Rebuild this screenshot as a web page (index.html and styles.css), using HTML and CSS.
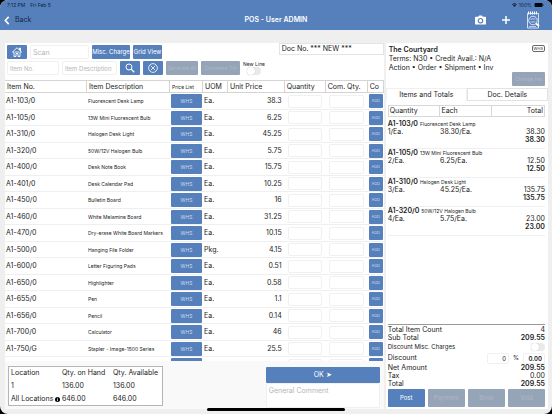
FILE: index.html
```html
<!DOCTYPE html>
<html lang="en">
<head>
  <meta charset="UTF-8" />
  <meta name="viewport" content="width=device-width, initial-scale=1" />
  <title>POS - User ADMIN</title>
  <link rel="stylesheet" href="styles.css">
</head>
<body>
<div class="device">

  <header class="header">
    <div class="status">
      <span>7:12 PM</span>
      <span>Fri Feb 5</span>
      <span class="status-right">
        <svg class="wifi" viewBox="0 0 12 9"><path d="M0 3a9 9 0 0 1 12 0L10.600 4.500a7 7 0 0 0-9.200 0zM2.300 5.400a5.500 5.500 0 0 1 7.400 0L6 9z" fill="#10233f"/></svg>
        <span>100%</span>
        <svg class="battery" viewBox="0 0 20 9"><rect width="18" height="9" rx="2" fill="#05080f"/><rect x="18.500" y="3" width="1.500" height="3" fill="#05080f"/></svg>
      </span>
    </div>
    <nav class="nav">
      <a href="#" class="back">
        <svg viewBox="0 0 10 16"><path d="M8 1.500 2 8l6 6.500" fill="none" stroke="#fff" stroke-width="2.800"/></svg>
        Back
      </a>
      <h1>POS - User ADMIN</h1>
      <div class="nav-icons">
        <button aria-label="Camera"><svg class="camera" viewBox="0 0 24 20"><path fill="#fff" fill-rule="evenodd" d="M2 3h5l2-3h6l2 3h5a2 2 0 0 1 2 2v13a2 2 0 0 1-2 2H2a2 2 0 0 1-2-2V5a2 2 0 0 1 2-2zm10 2.500a6 6 0 1 0 0 12 6 6 0 0 0 0-12zm0 2.500a3.500 3.500 0 1 1 0 7 3.500 3.500 0 0 1 0-7z"/></svg></button>
        <button aria-label="Add"><svg class="plus" viewBox="0 0 16 16"><path d="M8 0v16M0 8h16" stroke="#fff" stroke-width="3"/></svg></button>
        <button aria-label="Search documents"><svg class="notes" viewBox="0 0 28 36" fill="none" stroke="#fff" stroke-width="1.500"><path d="M3 5h22v29H3z"/><path d="M5 1v6M9 1v6M13 1v6M17 1v6M21 1v6" stroke-width="2.200"/><circle cx="14" cy="19" r="8.500"/><path d="M9 16h10M9 22h10M6 31h14" stroke-width="1.200"/><path d="m20 25 6 5" stroke-width="3.500"/></svg></button>
      </div>
    </nav>
  </header>

  <main class="main">

    <section class="left">
      <div class="tools">
        <div class="tool-rows">
          <div class="row">
            <button class="btn icon-btn" aria-label="Home"><svg class="home" viewBox="0 0 20 20" fill="none" stroke="#fff" stroke-width="1.800"><path d="M1 10 10 1.500 19 10h-3v9h-4v-6H8v6H4v-9zM15 6V2h2v6"/><path d="M6 10h8"/></svg></button>
            <input class="field scan" placeholder="Scan" aria-label="Scan">
            <button class="btn misc">Misc. Charge</button>
            <button class="btn grid-view">Grid View</button>
          </div>
          <div class="row">
            <input class="field item-no" placeholder="Item No." aria-label="Item No.">
            <input class="field item-desc" placeholder="Item Description" aria-label="Item Description">
            <button class="btn icon-btn" aria-label="Search"><svg viewBox="0 0 20 20" fill="none" stroke="#fff" stroke-width="2"><circle cx="8" cy="8" r="6"/><path d="m12.500 12.500 6 6" stroke-width="2.600"/></svg></button>
            <button class="btn icon-btn" aria-label="Clear"><svg viewBox="0 0 20 20" fill="none" stroke="#fff" stroke-width="1.600"><circle cx="10" cy="10" r="8.800"/><path d="m5.500 5.500 9 9m0-9-9 9"/></svg></button>
            <button class="btn gen" disabled>Generate All</button>
            <button class="btn down" disabled>Comment Txt</button>
            <label class="new-line">New Line<input type="checkbox" class="switch"></label>
          </div>
        </div>
        <div class="doc-no">Doc No. *** NEW ***</div>
      </div>

      <div class="list">
        <table class="items">
          <colgroup><col class="c-no"><col class="c-desc"><col class="c-list"><col class="c-uom"><col class="c-price"><col class="c-qty"><col class="c-com"><col class="c-co"></colgroup>
          <thead>
            <tr><th>Item No.</th><th>Item Description</th><th class="small">Price List</th><th>UOM</th><th>Unit Price</th><th>Quantity</th><th>Com. Qty.</th><th>Co</th></tr>
          </thead>
          <tbody id="itemRows"></tbody>
        </table>
      </div>

      <div class="bottom">
        <table class="stock">
          <tr><th>Location</th><th>Qty. on Hand</th><th>Qty. Available</th></tr>
          <tr><td>1</td><td>136.00</td><td>136.00</td></tr>
          <tr><td>All Locations <svg class="info" viewBox="0 0 12 12"><circle cx="6" cy="6" r="6"/><path d="M6 2v2M6 5v5" stroke="#fff" stroke-width="1.800"/></svg></td><td>646.00</td><td>646.00</td></tr>
        </table>
        <div class="confirm">
          <button class="btn ok">OK ➤</button>
          <textarea class="field comment" placeholder="General Comment" aria-label="General Comment"></textarea>
        </div>
      </div>
    </section>

    <aside class="right">
      <div class="customer">
        <span class="tag">WHS</span>
        <h2>The Courtyard</h2>
        <p>Terms: N30 • Credit Avail.: N/A</p>
        <p>Action • Order • Shipment • Inv</p>
        <button class="btn change" disabled>Change Inv</button>
      </div>
      <div class="tabs">
        <button class="tab active">Items and Totals</button>
        <button class="tab">Doc. Details</button>
      </div>
      <div class="order">
        <div class="order-head"><span>Quantity</span><span>Each</span><span>Total</span></div>
        <div id="orderLines" class="lines"></div>
        <div class="totals">
          <div class="total"><span>Total Item Count</span><span>4</span></div>
          <div class="total"><span>Sub Total</span><b>209.55</b></div>
          <label class="total misc-row"><span>Discount Misc. Charges</span><input type="checkbox" class="switch"></label>
          <div class="total discount"><label for="discount">Discount</label><input id="discount" class="field" value="0"><span>%</span><input class="field bold" value="0.00" aria-label="Discount amount"></div>
          <div class="total"><span>Net Amount</span><b>209.55</b></div>
          <div class="total"><span>Tax</span><span>0.00</span></div>
          <div class="total"><span>Total</span><b>209.55</b></div>
        </div>
        <div class="actions">
          <button class="btn">Post</button>
          <button class="btn" disabled>Payment</button>
          <button class="btn" disabled>Book</button>
          <button class="btn" disabled>Void</button>
        </div>
      </div>
    </aside>

  </main>
  <div class="home-bar"></div>
</div>

<script>
  const items = [
    ['A1-103/0', 'Fluorescent Desk Lamp', 'Ea.', '38.3'],
    ['A1-105/0', '13W Mini Fluorescent Bulb', 'Ea.', '6.25'],
    ['A1-310/0', 'Halogen Desk Light', 'Ea.', '45.25'],
    ['A1-320/0', '50W/12V Halogen Bulb', 'Ea.', '5.75'],
    ['A1-400/0', 'Desk Note Book', 'Ea.', '15.75'],
    ['A1-401/0', 'Desk Calendar Pad', 'Ea.', '10.25'],
    ['A1-450/0', 'Bulletin Board', 'Ea.', '16'],
    ['A1-460/0', 'White Melamine Board', 'Ea.', '31.25'],
    ['A1-470/0', 'Dry-erase White Board Markers', 'Ea.', '10.15'],
    ['A1-500/0', 'Hanging File Folder', 'Pkg.', '4.15'],
    ['A1-600/0', 'Letter Figuring Pads', 'Ea.', '0.51'],
    ['A1-650/0', 'Highlighter', 'Ea.', '0.58'],
    ['A1-655/0', 'Pen', 'Ea.', '1.1'],
    ['A1-656/0', 'Pencil', 'Ea.', '0.14'],
    ['A1-700/0', 'Calculator', 'Ea.', '46'],
    ['A1-750/G', 'Stapler - Image-1500 Series', 'Ea.', '25.5'],
    ['', '', '', '']
  ];

  document.getElementById('itemRows').innerHTML = items.map(([no, desc, uom, price]) => `
    <tr>
      <td>${no}</td>
      <td class="small">${desc}</td>
      <td class="cell-btn"><button class="btn whs">${no ? 'WHS' : ''}</button></td>
      <td class="uom">${uom}</td>
      <td class="num">${price}</td>
      <td class="cell-field"><input class="field" aria-label="Quantity"></td>
      <td class="cell-field"><input class="field" aria-label="Committed quantity"></td>
      <td class="cell-btn"><button class="btn add">${no ? 'ADD' : ''}</button></td>
    </tr>`).join('');

  const lines = [
    ['A1-103/0', 'Fluorescent Desk Lamp', '1/Ea.', '38.30/Ea.', '38.30'],
    ['A1-105/0', '13W Mini Fluorescent Bulb', '2/Ea.', '6.25/Ea.', '12.50'],
    ['A1-310/0', 'Halogen Desk Light', '3/Ea.', '45.25/Ea.', '135.75'],
    ['A1-320/0', '50W/12V Halogen Bulb', '4/Ea.', '5.75/Ea.', '23.00']
  ];

  document.getElementById('orderLines').innerHTML = lines.map(([no, desc, qty, each, total]) => `
    <div class="line">
      <div><b>${no}</b> <span class="small">${desc}</span></div>
      <div class="line-cols"><span>${qty}</span><span>${each}</span><span>${total}</span></div>
      <div class="line-total">${total}</div>
    </div>`).join('');
</script>
</body>
</html>
```

FILE: styles.css
```css
* {
  box-sizing: border-box;
}

body {
  margin: 0;
  background: #000;
  color: #222;
  font-family: Inter, "Liberation Sans", sans-serif;
  font-size: 7px;
  line-height: 8px;
}

button, input, textarea {
  font: inherit;
  margin: 0;
}

h1, h2, p {
  margin: 0;
  font-size: 7px;
}

.device {
  display: flex;
  flex-direction: column;
  height: 100vh;
  background: #efefef;
  border-radius: 8px;
  overflow: hidden;
  position: relative;
}

/* Header */
.header {
  background: #5680bb;
  height: 30px;
  flex: none;
}

.status {
  display: flex;
  align-items: center;
  gap: 5px;
  height: 10px;
  padding: 0 8px 0 7px;
  font-size: 5px;
  color: #10233f;
}

.status-right {
  margin-left: auto;
  display: flex;
  align-items: center;
  gap: 2px;
}

.wifi {
  width: 5px;
  height: 4px;
}

.battery {
  width: 10px;
  height: 4px;
}

.nav {
  display: grid;
  grid-template-columns: 1fr auto 1fr;
  align-items: center;
  height: 20px;
  padding: 0 4px;
}

.nav h1 {
  color: #fff;
  font-weight: 600;
}

.back {
  display: flex;
  align-items: center;
  gap: 5px;
  color: #16263f;
  text-decoration: none;
}

.back svg {
  width: 6px;
  height: 9px;
}

.nav-icons {
  display: flex;
  justify-content: flex-end;
  align-items: center;
  gap: 16px;
  padding-right: 8px;
}

.nav-icons button {
  padding: 0;
  border: 0;
  background: none;
  display: flex;
}

.camera {
  width: 11px;
  height: 10px;
}

.plus {
  width: 8px;
  height: 8px;
}

.notes {
  width: 14px;
  height: 18px;
}

/* Shared controls */
.btn {
  display: flex;
  align-items: center;
  justify-content: center;
  padding: 0;
  border: 0;
  border-radius: 1px;
  background: #5680bb;
  color: #fff;
  white-space: nowrap;
}

.btn:disabled {
  background: #96a4b7;
  color: #adb8c7;
}

.btn svg {
  width: 10px;
  height: 10px;
}

.field {
  border: 1px solid #f0f0f0;
  border-radius: 2px;
  background: #fff;
  color: #222;
  padding: 0 2px;
  min-width: 0;
  outline: none;
}

.field::placeholder {
  color: #b5b5b8;
}

.switch {
  appearance: none;
  width: 14px;
  height: 8px;
  border-radius: 4px;
  background: #e9e9ea;
}

.switch::before {
  content: "";
  display: block;
  width: 8px;
  height: 8px;
  border-radius: 50%;
  background: #fff;
  box-shadow: 0 0 1px #aaa;
}

.small {
  font-size: 5px;
}

/* Columns */
.main {
  flex: 1;
  min-height: 0;
  display: grid;
  grid-template-columns: 7fr 3fr;
  gap: 2px;
  padding: 13px 4px 5px 5px;
}

.left {
  display: flex;
  flex-direction: column;
  min-height: 0;
  background: #f9f9f9;
}

.tools {
  display: flex;
  justify-content: space-between;
  align-items: flex-start;
  height: 37px;
  background: #fff;
}

.tool-rows {
  display: flex;
  flex-direction: column;
  gap: 2px;
  padding: 2px 0 0 2px;
}

.row {
  display: flex;
  gap: 3px;
}

.row .btn, .row .field {
  height: 14px;
}

.icon-btn { width: 20px; }
.scan { width: 59px; }
.misc { width: 38px; }
.grid-view { width: 29px; }
.item-no { width: 52px; }
.item-desc { width: 55px; }
.gen { width: 32px; font-size: 5px; }
.down { width: 39px; font-size: 5px; }

.misc, .grid-view, .item-no, .item-desc {
  font-size: 6px;
}

.new-line {
  display: flex;
  flex-direction: column;
  align-items: center;
  font-size: 5px;
  line-height: 6px;
}

.doc-no {
  width: 105px;
  height: 12px;
  line-height: 10px;
  padding-left: 2px;
  border: 1px solid #e4e4e4;
}

/* Item list */
.list {
  height: 281px;
  overflow: hidden;
  background: #fff;
}

.items {
  width: 100%;
  table-layout: fixed;
  border-collapse: separate;
  border-spacing: 0;
}

.items th, .items td {
  padding: 0 0 0 1px;
  text-align: left;
  white-space: nowrap;
  overflow: hidden;
}

.items th {
  height: 13px;
  padding-left: 2px;
  font-weight: 400;
  border: solid #d4d4d4;
  border-width: 1px 1px 1px 0;
}

.items tbody tr {
  height: 16px;
}

.items tbody tr:nth-child(odd) {
  height: 17px;
}

.items td {
  border-bottom: 1px solid #efefef;
}

.items .num {
  text-align: right;
  padding-right: 3px;
}

.c-no { width: 82px; }
.c-desc { width: 83px; }
.c-list { width: 33px; }
.c-uom { width: 25px; }
.c-qty { width: 41px; }
.c-com { width: 42px; }
.c-co { width: 16px; }

.items .cell-field {
  padding: 0 4px 0 3px;
}

.items .cell-field .field {
  display: block;
  width: 100%;
  height: 13px;
}

.whs, .add {
  width: 31px;
  height: 14px;
  font-size: 5px;
  color: #cddaec;
}

.add {
  width: 14px;
  font-size: 4px;
}

/* Stock and comment */
.bottom {
  flex: 1;
  display: flex;
  justify-content: space-between;
  align-items: flex-start;
  padding: 5px 4px 0 3px;
}

.stock {
  width: 155px;
  height: 40px;
  background: #fff;
  border: 1px solid #b5b5b5;
  border-spacing: 0;
  table-layout: fixed;
}

.stock th, .stock td {
  padding: 0 0 0 2px;
  font-weight: 400;
  text-align: left;
  white-space: nowrap;
}

.info {
  width: 5px;
  height: 5px;
  vertical-align: -1px;
}

.confirm {
  width: 114px;
  display: flex;
  flex-direction: column;
  padding-top: 1px;
}

.ok {
  height: 16px;
}

.comment {
  height: 25px;
  resize: none;
  padding-top: 3px;
}

/* Right side */
.right {
  display: flex;
  flex-direction: column;
  background: #fff;
  min-height: 0;
}

.customer {
  position: relative;
  height: 45px;
  padding: 2px 3px;
  line-height: 9px;
}

.customer h2 {
  font-weight: 600;
}

.tag {
  position: absolute;
  top: 2px;
  right: 3px;
  padding: 0 1px;
  border: 1px solid #666;
  border-radius: 2px;
  font-size: 4px;
  line-height: 5px;
}

.change {
  width: 33px;
  height: 14px;
  margin-left: auto;
  font-size: 5px;
}

.tabs {
  display: flex;
}

.tab {
  flex: 1;
  height: 13px;
  padding: 0;
  border: 1px solid #e2e2e2;
  background: #fff;
  color: #222;
}

.tab.active {
  border-color: #efefef;
  border-bottom-color: #fff;
}

.order {
  flex: 1;
  display: flex;
  flex-direction: column;
  padding: 4px 3px 2px 2px;
}

.order-head, .line-cols {
  display: grid;
  grid-template-columns: 1fr 1fr 1fr;
}

.order-head {
  height: 12px;
  border: 1px solid #d8d8d8;
  line-height: 10px;
}

.order-head span {
  padding: 0 1px;
  border-right: 1px solid #d8d8d8;
}

.order-head span:last-child {
  border: 0;
}

.order-head span:last-child, .line-cols span:last-child {
  text-align: right;
}

.lines {
  flex: 1;
  padding-top: 3px;
}

.line {
  height: 29px;
  border-bottom: 1px solid #efefef;
}

.line b, .line-total, .total b, .bold {
  font-weight: 600;
}

.line-total {
  text-align: right;
}

.totals {
  padding: 1px 0;
  border-top: 1px solid #999;
}

.total {
  display: flex;
  justify-content: space-between;
  align-items: center;
}

.misc-row {
  height: 10px;
  font-size: 6px;
}

.discount {
  height: 12px;
  gap: 4px;
  font-size: 6px;
}

.discount label {
  flex: 1;
  font-size: 7px;
}

.discount .field {
  width: 22px;
  height: 11px;
  text-align: right;
}

.actions {
  display: flex;
  gap: 3px;
}

.actions .btn {
  flex: 1;
  height: 18px;
  font-size: 6px;
}

/* Home indicator */
.home-bar {
  position: absolute;
  left: 50%;
  bottom: 3px;
  width: 25%;
  height: 3px;
  border-radius: 2px;
  background: #000;
  transform: translateX(-50%);
}
```
